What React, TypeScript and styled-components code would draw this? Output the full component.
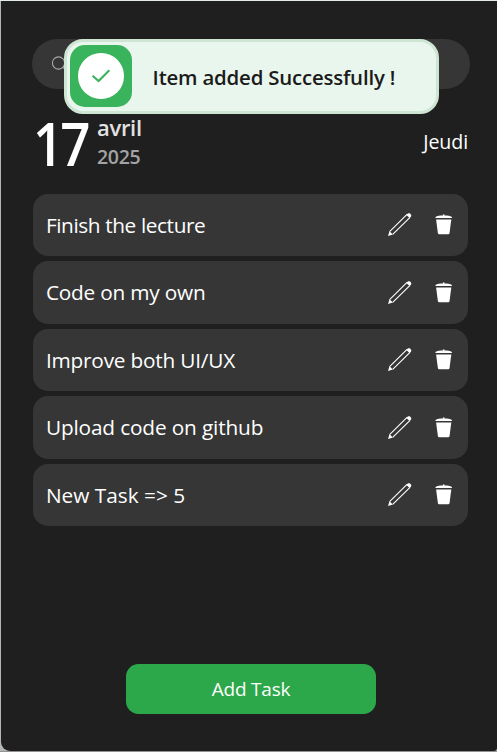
import React from 'react';
import styled, { createGlobalStyle } from 'styled-components';

const Global = createGlobalStyle`
  * { box-sizing: border-box; }
  body {
    margin: 0;
    background: linear-gradient(to bottom, #e4eaea 0 1px, #b4b7b8 1px 751px, #929292 751px);
    font-family: "Open Sans", "Noto Sans", sans-serif;
  }
`;

const Backdrop = styled.div`
  width: 497px;
  height: 752px;
  padding: 1px 0 1px 1px;
`;

const Window = styled.main`
  position: relative;
  display: flex;
  flex-direction: column;
  height: 750px;
  padding: 37.5px 27px 37.5px 31px;
  border-radius: 0 0 3px 9px;
  background: #1f1f1f;
  color: #fff;
`;

const SearchBar = styled.div`
  display: flex;
  align-items: center;
  flex: none;
  height: 50px;
  padding: 0 0 0 19px;
  border-radius: 25px;
  background: #363636;
`;

const Toast = styled.div`
  position: absolute;
  left: 62.6px;
  top: 37.5px;
  width: 375px;
  height: 75px;
  display: flex;
  align-items: center;
  padding-left: 3px;
  border: 3px solid #cfe5d4;
  border-radius: 19px;
  background: #e9f6ed;
  color: #1b1b1b;
`;

const ToastBadge = styled.div`
  display: grid;
  place-items: center;
  width: 62.5px;
  height: 62.5px;
  border-radius: 15px;
  background: #39b35c;
`;

const ToastDisc = styled.div`
  display: grid;
  place-items: center;
  width: 45.5px;
  height: 45.5px;
  border-radius: 50%;
  background: #fff;
`;

const Label = styled.span<{ $size: number; $weight?: number; $spacing?: number; $color?: string; $line?: number }>`
  font-size: ${p => p.$size}px;
  font-weight: ${p => p.$weight ?? 400};
  letter-spacing: ${p => p.$spacing ?? 0}px;
  color: ${p => p.$color ?? 'inherit'};
  line-height: ${p => p.$line ?? 28}px;
  white-space: nowrap;
`;

const ToastText = styled(Label)`
  margin: 2px 0 0 20.5px;
`;

const DateBar = styled.header`
  display: flex;
  align-items: flex-start;
  height: 105px;
  padding: 23px 2px 0 1px;
`;

const Day = styled(Label)`
  width: 56px;
  transform: scaleX(0.88);
  transform-origin: left;
`;

const MonthYear = styled.div`
  display: flex;
  flex-direction: column;
  padding: 1.5px 0 0 8px;
`;

const Weekday = styled(Label)`
  margin: 16px 0 0 auto;
`;

const TaskList = styled.ul`
  display: flex;
  flex-direction: column;
  gap: 5px;
  margin: 0 1.6px 0 1.4px;
  padding: 0;
  list-style: none;
`;

const TaskRow = styled.li`
  display: flex;
  align-items: center;
  height: 62.5px;
  padding: 0 15.4px 0 12.5px;
  border-radius: 15px;
  background: #363636;
`;

const Actions = styled.div`
  display: flex;
  align-items: center;
  gap: 22.5px;
  margin-left: auto;
`;

const IconButton = styled.button`
  display: block;
  padding: 0;
  border: 0;
  background: none;
  color: #fff;
  svg { display: block; }
`;

const AddButton = styled.button`
  width: 250px;
  height: 50px;
  margin: auto 0 0 94px;
  padding: 0;
  border: 0;
  border-radius: 12.5px;
  background: #2ca84a;
  color: #fff;
  font-family: inherit;
`;

const SearchIcon = () => (
  <svg width="20" height="20" viewBox="0 0 20 20" fill="none" stroke="#a8a8a8" strokeWidth="1.1">
    <circle cx="7.5" cy="9" r="6.1" />
    <path d="M12 13.3l5 5" />
  </svg>
);

const CheckIcon = () => (
  <svg width="20" height="16" viewBox="0 0 20 16" fill="none" stroke="#39b35c" strokeWidth="2.1">
    <path d="M1.6 7.7l6 5.4L18.3 2.3" />
  </svg>
);

const PencilIcon = () => (
  <svg width="25" height="25" viewBox="0 0 25 25" fill="none" stroke="currentColor">
    <path d="M1.6 19.6L19 2.4M4.7 22.4L22 5.3" strokeWidth="1.1" />
    <path d="M0 24l1.5-4.8 3.4 3.3z" fill="currentColor" stroke="none" />
    <path d="M18.4 2.9l1.4-1.4c1.8-1.2 4.4 1.3 3.2 3.1l-1.4 1.4z" fill="currentColor" stroke="none" />
  </svg>
);

const TrashIcon = () => (
  <svg width="18" height="21" viewBox="0 0 18 21" fill="currentColor">
    <path d="M.5 3.9V3c1.5-1 4.6-1.3 7.4-1.4V.5h1.6v1.1c2.8.1 5.9.4 7.4 1.4v.9z" />
    <path d="M1.1 5.4h15.2l-1.8 13.9q-.2 1-1.3 1H4.2q-1.1 0-1.3-1z" />
  </svg>
);

const tasks = [
  { title: 'Finish the lecture', tracking: -0.39 },
  { title: 'Code on my own', tracking: -0.21 },
  { title: 'Improve both UI/UX', tracking: -0.21 },
  { title: 'Upload code on github', tracking: -0.15 },
  { title: 'New Task => 5', tracking: 0 },
];

export default function App() {
  return (
    <>
      <Global />
      <Backdrop>
        <Window>
          <SearchBar><SearchIcon /></SearchBar>
          <DateBar>
            <Day $size={60} $weight={600} $spacing={-3.2} $line={62}>17</Day>
            <MonthYear>
              <Label $size={22} $weight={600} $spacing={-0.3} $color="#e2e2e2">avril</Label>
              <Label $size={19.5} $weight={600} $spacing={-0.3} $color="#a3a3a3" $line={32}>2025</Label>
            </MonthYear>
            <Weekday $size={19.6} $spacing={-0.1}>Jeudi</Weekday>
          </DateBar>
          <TaskList>
            {tasks.map(({ title, tracking }) => (
              <TaskRow key={title}>
                <Label $size={20.8} $spacing={tracking}>{title}</Label>
                <Actions>
                  <IconButton aria-label="Edit"><PencilIcon /></IconButton>
                  <IconButton aria-label="Delete"><TrashIcon /></IconButton>
                </Actions>
              </TaskRow>
            ))}
          </TaskList>
          <AddButton><Label $size={19} $spacing={-0.2}>Add Task</Label></AddButton>
          <Toast role="status">
            <ToastBadge><ToastDisc><CheckIcon /></ToastDisc></ToastBadge>
            <ToastText $size={20.4} $weight={600} $spacing={-0.19}>Item added Successfully !</ToastText>
          </Toast>
        </Window>
      </Backdrop>
    </>
  );
}
